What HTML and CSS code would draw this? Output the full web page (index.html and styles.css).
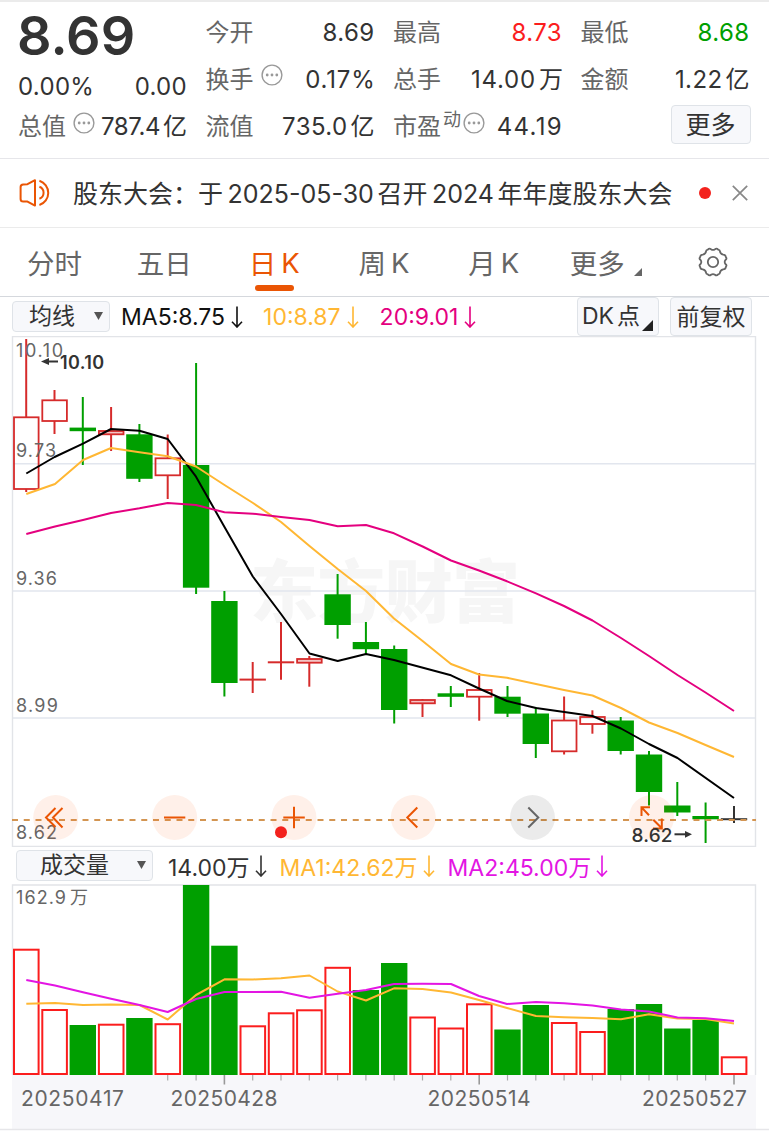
FILE: index.html
```html
<!DOCTYPE html>
<html lang="zh-CN">
<head>
<meta charset="utf-8">
<title>日K</title>
<link rel="stylesheet" href="styles.css">
</head>
<body>
<svg class="defs" width="0" height="0">
  <symbol id="dots" viewBox="0 0 22 22"><circle cx="11" cy="11" r="9.9" fill="none" stroke="#999" stroke-width="1.4"/><circle cx="6.2" cy="11" r="1.4" fill="#999"/><circle cx="11" cy="11" r="1.4" fill="#999"/><circle cx="15.8" cy="11" r="1.4" fill="#999"/></symbol>
  <symbol id="down" viewBox="0 0 12 22"><path d="M6 0.5V20.8M1 15.8L6 21L11 15.8" fill="none" stroke="currentColor" stroke-width="1.6"/></symbol>
</svg>

<header class="quote">
  <div class="col">
    <div class="price">8.69</div>
    <div class="row change"><span>0.00%</span><span>0.00</span></div>
    <div class="row"><label>总值</label><svg class="info"><use href="#dots"/></svg><b class="tight">787.4<i>亿</i></b></div>
  </div>
  <div class="col">
    <div class="row"><label>今开</label><b>8.69</b></div>
    <div class="row"><label>换手</label><svg class="info"><use href="#dots"/></svg><b class="ones">0.17%</b></div>
    <div class="row"><label>流值</label><b>735.0<i>亿</i></b></div>
  </div>
  <div class="col">
    <div class="row"><label>最高</label><b class="up">8.73</b></div>
    <div class="row"><label>总手</label><b class="ones">14.00<i>万</i></b></div>
    <div class="row"><label>市盈</label><sup>动</sup><svg class="info near"><use href="#dots"/></svg><b class="pe">44.19</b></div>
  </div>
  <div class="col">
    <div class="row"><label>最低</label><b class="down">8.68</b></div>
    <div class="row"><label>金额</label><b>1.22<i>亿</i></b></div>
    <div class="row end"><button class="more">更多</button></div>
  </div>
</header>

<section class="notice">
  <svg class="horn" viewBox="0 0 34 30" width="34" height="30"><path d="M16 2.2V27.6L8.5 23.6H4.2Q1.6 23.6 1.6 21V9Q1.6 6.5 4.2 6.4L8.5 6.2ZM20.4 8.8A6.4 6.4 0 0 1 20.4 20.8M20.4 2.8A12.7 12.7 0 0 1 20.4 27" fill="none" stroke="#ea5504" stroke-width="2" stroke-linejoin="round"/></svg>
  <p>股东大会：于<span>2025-05-30</span>召开<span>2024</span>年年度股东大会</p>
  <i class="reddot"></i>
  <svg class="close" viewBox="0 0 16 16" width="16" height="16"><path d="M0.8 0.8L15.2 15.2M15.2 0.8L0.8 15.2" stroke="#888" stroke-width="1.7"/></svg>
</section>

<nav class="tabs">
  <a>分时</a>
  <a>五日</a>
  <a class="on">日<span>K</span></a>
  <a>周<span>K</span></a>
  <a>月<span>K</span></a>
  <a class="drop">更多<svg width="8" height="8"><path d="M8 0V8H0Z" fill="#666"/></svg></a>
  <a class="set"><svg viewBox="0 0 32 30" width="32" height="30"><path d="M10.8 2.6Q12.4 0.8 14 2.2Q16 3.6 18 2.2Q19.6 0.8 21.2 2.6Q23 3.2 22.9 4.2Q23.2 7 26.2 7.6Q28.6 7.6 29 10.4Q30.2 11.8 28.4 13Q27 15 28.4 17Q30.2 18.2 29 19.6Q28.6 22.4 26.2 22.4Q23.2 23 22.9 25.8Q23 26.8 21.2 27.4Q19.6 29.2 18 27.8Q16 26.4 14 27.8Q12.4 29.2 10.8 27.4Q9 26.8 9.1 25.8Q8.8 23 5.8 22.4Q3.4 22.4 3 19.6Q1.8 18.2 3.6 17Q5 15 3.6 13Q1.8 11.8 3 10.4Q3.4 7.6 5.8 7.6Q8.8 7 9.1 4.2Q9 3.2 10.8 2.6Z" fill="none" stroke="#666" stroke-width="1.8" stroke-linejoin="round"/><circle cx="16" cy="15" r="5.2" fill="none" stroke="#666" stroke-width="1.8"/></svg></a>
</nav>

<section class="bar ma">
  <button class="select">均线<svg width="9" height="8"><path d="M0 0H9L4.5 8Z" fill="#555"/></svg></button>
  <span class="ind k">MA5:8.75<svg><use href="#down"/></svg></span>
  <span class="ind y">10:8.87<svg><use href="#down"/></svg></span>
  <span class="ind p">20:9.01<svg><use href="#down"/></svg></span>
  <button class="opt dk"><span>DK</span>点<svg width="11" height="11"><path d="M11 0V11H0Z" fill="#222"/></svg></button>
  <button class="opt">前复权</button>
</section>

<svg class="chart" id="price" viewBox="0 336 769 511" width="769" height="511">
  <text class="mark" x="250" y="617" textLength="270">东方财富</text>
  <path class="grid" d="M12 463.8H756M12 591H756M12 718H756"/>
  <path class="frame" d="M12.5 336.5H755.5V846.5H12.5Z"/>
  <g id="candles"></g>
  <path d="M26.3 473.5L54.6 457L83 443.7L111 429L139.5 430.7L167.7 439L196 476.7L224.5 527L252.8 576.5L281 614L309.5 653.5L337.7 661L366 654L394 660L451 675.3L479 688.5L507 701L536 708L592.5 716L621 728.5L649 744L677.5 758L734 798" class="line" stroke="#000"/>
  <path d="M26.3 494L55 484L83 460L111 448L139.5 452.3L167.7 456.3L196 466.5L224.5 485L253 503L281 522L309.5 546L337.7 569L366 591L394 618.5L422.6 641L451 664L479 674.5L507 677.7L536 684L564 690L592.5 695.5L621 708L649 722.5L677.5 733L705.5 745L734 757" class="line" stroke="#ffb733"/>
  <path d="M26.3 534L55 526.5L83 520L111 513L139.5 508.3L167.7 503L196 505L224.5 512.3L253 513.7L281 517L309.5 520L337.7 526.3L366 525L394 533.3L422.6 546.5L451 560.5L479 570.5L507 581.3L536 593.3L564 606L592.5 620.5L621 638L649 656L677.5 675L705.5 692.5L734 711" class="line" stroke="#e4007f"/>
  <path d="M12 820H756" stroke="#d39552" stroke-width="2" stroke-dasharray="6 5.75"/>
  <g class="axis">
    <text x="16" y="357" textLength="47">10.10</text>
    <text x="16" y="457" textLength="40">9.73</text>
    <text x="16" y="584.5" textLength="41">9.36</text>
    <text x="16" y="711.5" textLength="42">8.99</text>
    <text x="16" y="839" textLength="41">8.62</text>
  </g>
  <g class="hilo">
    <path d="M45 361.5H58" stroke="#333" stroke-width="2"/><path d="M41 361.5L49 358V365Z"/>
    <text x="60" y="368.5" textLength="44">10.10</text>
  </g>
  <g fill="#ff5a0a" fill-opacity=".09">
    <circle cx="55.7" cy="817.5" r="22.5"/><circle cx="174.7" cy="817.5" r="22.5"/><circle cx="294" cy="817.5" r="22.5"/><circle cx="413.3" cy="817.5" r="22.5"/><circle cx="651.5" cy="817.5" r="22.5"/>
  </g>
  <circle cx="532.5" cy="817.5" r="22.5" fill="#000" fill-opacity=".08"/>
  <g fill="none" stroke="#ea5504" stroke-width="2">
    <path d="M55.5 808L46 817.5L55.5 827M62.5 808L53 817.5L62.5 827.5"/>
    <path d="M164 817.5H185.3M283.3 817.5H304.8M294 806.7V828.3"/>
    <path d="M417.3 807.5L407.3 817.5L417.3 827.5"/>
    <path d="M641.5 816V807.3H650M641.8 807.6L649 815.3M653.3 819.7L661.3 827.7M661.8 818.5V828.5H653"/>
  </g>
  <path d="M528.3 807.5L538.3 817.5L528.3 827.5" fill="none" stroke="#666" stroke-width="2"/>
  <circle cx="281" cy="832.3" r="6" fill="#f3221d"/>
  <g class="hilo">
    <text class="lo" x="631.5" y="841.5" textLength="41">8.62</text>
    <path d="M674.5 834.3H687" stroke="#333" stroke-width="2"/><path d="M692 834.3L685 831V837.8Z"/>
  </g>
</svg>

<section class="bar vol">
  <button class="select">成交量<svg width="9" height="8"><path d="M0 0H9L4.5 8Z" fill="#555"/></svg></button>
  <span class="ind g">14.00万<svg><use href="#down"/></svg></span>
  <span class="ind y">MA1:42.62万<svg><use href="#down"/></svg></span>
  <span class="ind m">MA2:45.00万<svg><use href="#down"/></svg></span>
</section>

<svg class="chart" id="volume" viewBox="0 884 769 249" width="769" height="249">
  <rect x="12" y="1075" width="744" height="54" fill="#f7f7fa"/>
  <path class="frame" d="M12.5 1075V885H755.5V1075"/>
  <path d="M0 1129.5H769" stroke="#e6e6e9" stroke-width="1.4"/>
  <g class="axis">
    <text x="16" y="904" textLength="50">162.9</text><text x="70" y="904">万</text>
    <text class="date" x="21" y="1105.5" textLength="103">20250417</text>
    <text class="date" x="170.5" y="1105.5" textLength="107">20250428</text>
    <text class="date" x="427.5" y="1105.5" textLength="103">20250514</text>
    <text class="date" x="642" y="1105.5" textLength="105">20250527</text>
  </g>
  <g id="bars"></g>
  <path d="M26.3 1003.7L55 1003L83 1005L111 1004.5L139.5 1005L167.7 1019.5L196 995L224.5 979.3L253 979.5L281 978.3L309.5 975.5L337.7 991.5L366 1000.5L394 988.3L422.6 989L451 992.5L479 1000L507 1008L536 1016L564 1017.3L592.5 1018L621 1019.3L649 1014.3L677.5 1018.5L705.5 1019L734 1023.5" class="line" stroke="#ffb733"/>
  <path d="M26.3 980L55 985.5L83 992.3L111 998.7L139.5 1005L167.7 1012L196 999L224.5 992L253 992L281 991.7L309.5 997.7L337.7 993.7L366 990L394 984L422.6 983.7L451 984L479 996L507 1004L536 1002L564 1003.3L592.5 1005.5L621 1009.5L649 1011.5L677.5 1017.5L705.5 1018.2L734 1021" class="line" stroke="#e315e3"/>
</svg>
<script src="chart.js"></script>
</body>
</html>
```
FILE: chart.js
```js
// candle colour, body top, body bottom, wick top, wick bottom, volume bar top, volume colour
const days = [
  ['r', 417.3, 489, 339, 492, 949.7, 'r'],
  ['r', 400.3, 421, 390, 434, 1010, 'r'],
  ['g', 427.6, 431.2, 397, 465, 1025, 'g'],
  ['r', 431, 434.3, 407, 451, 1024.7, 'r'],
  ['g', 434.3, 478.8, 424, 482, 1018, 'g'],
  ['r', 458.3, 475.3, 434.5, 499, 1024.2, 'r'],
  ['g', 465, 587.7, 363, 594, 885, 'g'],
  ['g', 601, 683, 591, 696.5, 945.7, 'g'],
  ['r', 679.6, 679.6, 662, 693, 1026.3, 'r'],
  ['r', 662.3, 662.3, 622, 679.7, 1013.3, 'r'],
  ['r', 659, 662.7, 656, 686.7, 1010.3, 'r'],
  ['g', 594.3, 625, 574, 638.7, 967.8, 'r'],
  ['g', 642, 649.2, 622, 655, 990, 'g'],
  ['g', 649, 710, 645.5, 723.5, 963, 'g'],
  ['r', 700, 703.3, 699, 717, 1017.5, 'r'],
  ['g', 693.3, 696.8, 686, 707, 1028.5, 'r'],
  ['r', 690, 696.7, 673, 720.7, 1004.3, 'r'],
  ['g', 696.7, 713.7, 686, 717, 1029.5, 'g'],
  ['g', 713.5, 744, 707, 758, 1005, 'g'],
  ['r', 720.5, 751.3, 696.5, 754.5, 1023, 'r'],
  ['r', 717, 724, 710.3, 733.7, 1032, 'r'],
  ['g', 720.5, 751, 717, 754.5, 1009, 'g'],
  ['g', 754.5, 792, 751, 805.5, 1004, 'g'],
  ['g', 805.5, 812.5, 782, 816, 1028.5, 'g'],
  ['g', 816, 819.3, 802.5, 843, 1020, 'g'],
  ['k', 819.2, 819.2, 806, 823, 1057.3, 'r']
];
const colors = { r: '#d62b2b', g: '#009f00', k: '#333' };
const line = (x1, y1, x2, y2, c, w) =>
  `<path d="M${x1} ${y1}L${x2} ${y2}" stroke="${c}" stroke-width="${w}"/>`;

let candles = '', bars = '';
days.forEach(([t, top, bot, hi, lo, v, vt], i) => {
  const x = +(26.2 + i * 28.31).toFixed(1), c = colors[t];
  const l = x - 13.2;
  if (top === bot) {
    candles += line(x, hi, x, lo, c, 2) + line(l, top, l + 26.4, top, c, 2);
  } else if (t === 'g') {
    candles += line(x, hi, x, lo, c, 2) + `<rect x="${l}" y="${top}" width="26.4" height="${bot - top}" fill="${c}"/>`;
  } else {
    const fill = bot - top < 5 ? '#f3c4c4' : 'none';
    candles += line(x, hi, x, top, c, 2) + line(x, bot, x, lo, c, 2) +
      `<rect x="${l + 1}" y="${top}" width="24.6" height="${bot - top}" fill="${fill}" stroke="${c}" stroke-width="1.8"/>`;
  }
  bars += vt === 'g'
    ? `<rect x="${l}" y="${v}" width="26.4" height="${1075 - v}" fill="#009f00"/>`
    : `<rect x="${l + 1}" y="${v}" width="24.6" height="${1074 - v}" fill="#fff" stroke="#fb1d1d" stroke-width="2"/>`;
  const major = [7, 16, 25].includes(i);
  if (i > 4) bars += line(x, 1075, x, major ? 1084.5 : 1080.5, major ? '#999' : '#aaa', major ? 1.6 : 1.2);
});
document.getElementById('candles').innerHTML = candles;
document.getElementById('bars').innerHTML = bars;
```
FILE: styles.css
```css
* { box-sizing: border-box; }
body {
  margin: 0;
  width: 769px;
  height: 1133px;
  overflow: hidden;
  background: #fff;
  color: #333;
  font-family: Inter, "Noto Sans CJK SC", sans-serif;
  font-size: 24px;
}
.defs { position: absolute; }
i { font-style: normal; }
b { font-weight: 400; }
button {
  font: inherit;
  color: #333;
  padding: 0;
  background: #f7f8fb;
  border: 1.5px solid #dfe3e8;
  border-radius: 4px;
}
.quote {
  display: grid;
  grid-template-columns: repeat(4, 169px);
  column-gap: 18.5px;
  height: 159px;
  padding: 8px 0 0 18px;
  border-top: 2px solid #ebebeb;
  border-bottom: 1.5px solid #e6e6ea;
}
.col { display: flex; flex-direction: column; }
.row { display: flex; align-items: center; height: 46.5px; line-height: 46px; }
.row:last-child { padding-top: 2px; }
.row b { margin-left: auto; white-space: nowrap; letter-spacing: 0.4px; }
.row b i { margin-left: 3px; letter-spacing: 0; }
.row label { color: #666; }
.row.change { height: 34px; padding-top: 1px; justify-content: space-between; letter-spacing: 0.3px; }
.price { height: 59px; line-height: 52px; font-size: 54px; font-weight: 600; margin-left: -1px; }
.info { width: 22px; height: 22px; margin: -9px 0 0 7px; }
.info.near { margin-left: 2px; }
.row sup { font-size: 18px; line-height: 20px; margin: -14px 0 0 2px; color: #666; }
.row b.tight { letter-spacing: -0.4px; }
.row b.ones { letter-spacing: 0.8px; margin-right: -1px; }
.row b.pe { letter-spacing: 1.3px; margin-right: -1px; }
.up { color: #fb1d1d; }
.down { color: #009f00; }
.end { justify-content: flex-end; }
.more { width: 80px; height: 39px; margin: -5px -1px 0 0; font-size: 25px; line-height: 34px; }

.notice {
  display: flex;
  align-items: center;
  height: 69px;
  padding-left: 19px;
  border-bottom: 1.5px solid #ebebeb;
}
.notice p { margin: -3px 0 0 20px; width: 600px; font-size: 25px; white-space: nowrap; }
.notice p span { margin: 0 3.5px 0 4.5px; }
.reddot { width: 12px; height: 12px; margin-left: 26px; border-radius: 50%; background: #f3221d; }
.close { margin-left: 21px; }

.tabs {
  display: grid;
  grid-template-columns: repeat(7, 1fr);
  height: 69px;
  border-bottom: 1.5px solid #d5d8dd;
  font-size: 27.5px;
  color: #666;
}
.tabs a { position: relative; display: flex; align-items: center; justify-content: center; padding: 0 1px 1px 0; }
.tabs a span { margin: 2px 0 0 5px; }
.tabs .on { color: #ea5504; }
.tabs .on::after {
  content: "";
  position: absolute;
  left: 35px;
  bottom: 5px;
  width: 39px;
  height: 6px;
  border-radius: 3px;
  background: #ea5504;
}
.tabs a.drop { padding: 0 0 1px 3px; }
.tabs a.set { padding: 0 2px 0 0; }
.drop svg { margin: 20px 0 0 9px; }

.bar { display: flex; align-items: center; font-size: 23px; }
.bar.ma { height: 39px; padding: 0 17px 0 12px; }
.bar.vol { height: 37px; padding: 0 0 0 16px; }
.select {
  display: flex;
  align-items: center;
  justify-content: space-between;
  width: 98px;
  height: 31px;
  line-height: 26px;
  padding: 0 6px 1px 16px;
}
.vol .select { width: 137px; padding-left: 23px; }
.ind { display: flex; align-items: center; margin-left: 15px; white-space: nowrap; }
.ind svg { width: 14px; height: 22px; margin-left: 5px; }
.ind.k { margin-left: 11px; }
.ma .ind { padding-top: 1px; }
.ma .y { margin-left: 19px; }
.ma .p { margin-left: 20px; }
.vol .ind svg { margin-left: 4px; }
.vol .y, .vol .m { margin-left: 12px; }
.k { color: #111; } .g { color: #333; } .y { color: #ffb733; } .p { color: #e4007f; } .m { color: #e315e3; }
.opt { width: 82px; height: 39px; line-height: 36px; }
.dk { display: flex; align-items: baseline; margin-left: auto; margin-right: 11px; padding-left: 4px; }
.dk span { margin-right: 3px; }
.dk svg { margin: 0 0 -5px 2px; align-self: center; transform: translateY(6px); }

.chart { display: block; }
.chart text { font-family: Inter, "Noto Sans CJK SC", sans-serif; }
.mark { font-size: 68px; font-weight: 900; fill: #f6f6f6; }
.grid { stroke: #e2e6ee; stroke-width: 1.6; }
.frame { fill: none; stroke: #e2e4e8; stroke-width: 1.4; }
.line { fill: none; stroke-width: 2; stroke-linejoin: round; }
.axis { font-size: 18px; fill: #666; }
.axis .date { font-size: 21px; }
.hilo { font-size: 18px; font-weight: 600; fill: #333; }
.hilo .lo { font-size: 19px; font-weight: 500; }
```
